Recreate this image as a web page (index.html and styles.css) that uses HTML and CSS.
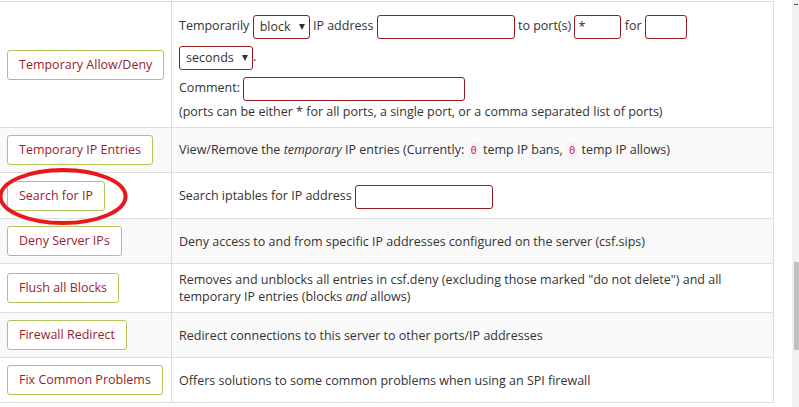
FILE: index.html
```html
<!DOCTYPE html>
<html>
<head>
<meta charset="utf-8">
<title>Firewall actions</title>
<link rel="stylesheet" href="styles.css">
</head>
<body>
<div class="page">
  <table class="actions">
    <colgroup><col class="c1"><col class="c2"></colgroup>
    <tr>
      <td class="btn-cell"><button class="btn">Temporary Allow/Deny</button></td>
      <td class="txt-cell form-cell">
        <div class="line">Temporarily <span class="sel-wrap"><select class="sel w-block"><option>block</option></select></span> IP address <input class="inp w-ip" type="text"> to port(s) <input class="inp w-port" type="text" value="*"> for <input class="inp w-for" type="text"></div>
        <div class="line"><span class="sel-wrap"><select class="sel w-sec"><option>seconds</option></select></span>.</div>
        <div class="line">Comment: <input class="inp w-comment" type="text"></div>
        <div class="note">(ports can be either * for all ports, a single port, or a comma separated list of ports)</div>
      </td>
    </tr>
    <tr class="alt">
      <td class="btn-cell"><button class="btn">Temporary IP Entries</button></td>
      <td class="txt-cell">View/Remove the <em>temporary</em> IP entries (Currently: <code>0</code> temp IP bans, <code>0</code> temp IP allows)</td>
    </tr>
    <tr>
      <td class="btn-cell"><button class="btn">Search for IP</button></td>
      <td class="txt-cell"><div class="line">Search iptables for IP address <input class="inp w-ip" type="text"></div></td>
    </tr>
    <tr class="alt">
      <td class="btn-cell"><button class="btn">Deny Server IPs</button></td>
      <td class="txt-cell">Deny access to and from specific IP addresses configured on the server (csf.sips)</td>
    </tr>
    <tr>
      <td class="btn-cell"><button class="btn">Flush all Blocks</button></td>
      <td class="txt-cell">Removes and unblocks all entries in csf.deny (excluding those marked "do not delete") and all temporary IP entries (blocks <em>and</em> allows)</td>
    </tr>
    <tr class="alt">
      <td class="btn-cell"><button class="btn">Firewall Redirect</button></td>
      <td class="txt-cell">Redirect connections to this server to other ports/IP addresses</td>
    </tr>
    <tr class="last">
      <td class="btn-cell"><button class="btn">Fix Common Problems</button></td>
      <td class="txt-cell">Offers solutions to some common problems when using an SPI firewall</td>
    </tr>
  </table>

  <svg class="circle" width="140" height="232" viewBox="0 0 140 232" aria-hidden="true">
    <ellipse cx="63" cy="196.5" rx="62.5" ry="26.5" fill="none" stroke="#e8181e" stroke-width="4"/>
  </svg>

  <div class="scroll"><div class="arrow"></div><div class="thumb"></div></div>
</div>
</body>
</html>
```

FILE: styles.css
```css
html, body {
  margin: 0;
  padding: 0;
  background: #fff;
}

body {
  font-family: "Open Sans", "DejaVu Sans", sans-serif;
  font-size: 12.5px;
  line-height: 17px;
  color: #333;
}

.page {
  position: relative;
  width: 799px;
  height: 407px;
  overflow: hidden;
  padding-top: 1px;
  box-sizing: border-box;
}

.actions {
  border-collapse: separate;
  border-spacing: 0;
  table-layout: fixed;
  width: 774px;
  border-right: 1px solid #ddd;
}

.c1 { width: 171px; }

.actions td {
  box-sizing: border-box;
  border-top: 1px solid #ddd;
  padding: 7px;
  vertical-align: middle;
}

.actions tr.last td {
  border-bottom: 1px solid #ddd;
}

.actions tr.alt td {
  background: #f9f9f9;
}

.actions td.txt-cell {
  border-left: 1px solid #ddd;
}

.actions td.form-cell {
  padding-top: 8px;
}

.btn {
  display: block;
  width: fit-content;
  box-sizing: border-box;
  height: 30px;
  padding: 6px 11px;
  border: 1px solid #b3c55b;
  border-radius: 3px;
  background: #fff;
  color: #9b1c2e;
  font: inherit;
  line-height: 16px;
  white-space: nowrap;
  cursor: pointer;
}

.line {
  height: 31px;
  line-height: 31px;
  white-space: nowrap;
}

.inp {
  box-sizing: border-box;
  height: 24px;
  border: 1px solid #991b1b;
  border-radius: 3px;
  padding: 0 3px;
  background: #fff;
  font: inherit;
  line-height: 20px;
  color: #333;
  vertical-align: middle;
}

.w-ip { width: 138px; }
.w-port { width: 47px; }
.w-for { width: 42px; }
.w-comment { width: 222px; }

.sel-wrap {
  position: relative;
  display: inline-block;
  vertical-align: middle;
  height: 24px;
  line-height: 22px;
}

.sel {
  -webkit-appearance: none;
  appearance: none;
  box-sizing: border-box;
  height: 24px;
  border: 1px solid #991b1b;
  border-radius: 3px;
  background: #fff;
  font: inherit;
  color: #333;
  padding: 0 16px 0 6px;
  line-height: 22px;
  display: block;
}

.sel-wrap::after {
  content: "";
  position: absolute;
  right: 5px;
  top: 9px;
  border-left: 3.5px solid transparent;
  border-right: 3.5px solid transparent;
  border-top: 6px solid #333;
  pointer-events: none;
}

.w-block { width: 57px; }
.w-sec { width: 74px; }

code {
  font-family: "DejaVu Sans Mono", monospace;
  font-size: 10.5px;
  color: #c7254e;
  background: #f9f2f4;
  padding: 2px 3px;
  border-radius: 3px;
}

.circle {
  position: absolute;
  left: 0;
  top: 0;
  pointer-events: none;
}

.scroll {
  position: absolute;
  top: 0;
  right: 0;
  width: 7px;
  height: 407px;
  background: #f1f1f1;
}

.arrow {
  position: absolute;
  top: 4px;
  left: 2px;
  width: 4px;
  height: 1px;
  background: #505050;
}

.thumb {
  position: absolute;
  left: 2px;
  top: 262px;
  width: 5px;
  height: 88px;
  background: #c1c1c1;
}
```
